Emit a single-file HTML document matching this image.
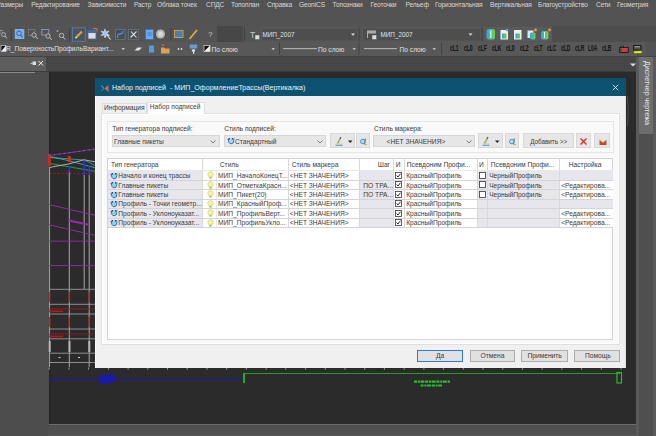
<!DOCTYPE html>
<html><head><meta charset="utf-8">
<style>
*{margin:0;padding:0;box-sizing:border-box}
html,body{width:656px;height:436px;overflow:hidden;background:#535353;font-family:"Liberation Sans",sans-serif;position:relative}
.a{position:absolute}
.t{position:absolute;white-space:nowrap;line-height:1}
</style></head><body>
<div class="a" style="left:0px;top:0px;width:656px;height:26px;background:#535353"></div>
<div class="t" style="left:-3.5px;top:1.6px;font-size:6.6px;color:#d8d8d8;letter-spacing:-0.12px">Размеры</div>
<div class="t" style="left:31.3px;top:1.6px;font-size:6.6px;color:#d8d8d8;letter-spacing:-0.12px">Редактирование</div>
<div class="t" style="left:87.5px;top:1.6px;font-size:6.6px;color:#d8d8d8;letter-spacing:-0.12px">Зависимости</div>
<div class="t" style="left:134px;top:1.6px;font-size:6.6px;color:#d8d8d8;letter-spacing:-0.12px">Растр</div>
<div class="t" style="left:157px;top:1.6px;font-size:6.6px;color:#d8d8d8;letter-spacing:-0.12px">Облака точек</div>
<div class="t" style="left:206px;top:1.6px;font-size:6.6px;color:#d8d8d8;letter-spacing:-0.12px">СПДС</div>
<div class="t" style="left:231px;top:1.6px;font-size:6.6px;color:#d8d8d8;letter-spacing:-0.12px">Топоплан</div>
<div class="t" style="left:267px;top:1.6px;font-size:6.6px;color:#d8d8d8;letter-spacing:-0.12px">Справка</div>
<div class="t" style="left:299px;top:1.6px;font-size:6.6px;color:#d8d8d8;letter-spacing:-0.12px">GeoniCS</div>
<div class="t" style="left:332.5px;top:1.6px;font-size:6.6px;color:#d8d8d8;letter-spacing:-0.12px">Топознаки</div>
<div class="t" style="left:370.5px;top:1.6px;font-size:6.6px;color:#d8d8d8;letter-spacing:-0.12px">Геоточки</div>
<div class="t" style="left:405.5px;top:1.6px;font-size:6.6px;color:#d8d8d8;letter-spacing:-0.12px">Рельеф</div>
<div class="t" style="left:435px;top:1.6px;font-size:6.6px;color:#d8d8d8;letter-spacing:-0.12px">Горизонтальная</div>
<div class="t" style="left:490px;top:1.6px;font-size:6.6px;color:#d8d8d8;letter-spacing:-0.12px">Вертикальная</div>
<div class="t" style="left:538px;top:1.6px;font-size:6.6px;color:#d8d8d8;letter-spacing:-0.12px">Благоустройство</div>
<div class="t" style="left:596px;top:1.6px;font-size:6.6px;color:#d8d8d8;letter-spacing:-0.12px">Сети</div>
<div class="t" style="left:617px;top:1.6px;font-size:6.6px;color:#d8d8d8;letter-spacing:-0.12px">Геометрия</div>
<div class="a" style="left:0px;top:26px;width:656px;height:16px;background:#4d4d4d"></div>
<div class="a" style="left:0px;top:26px;width:552px;height:16px;background:#545454"></div>
<div class="a" style="left:0px;top:42px;width:646px;height:13.5px;background:#585858"></div>
<div class="a" style="left:0px;top:55.5px;width:656px;height:1.5px;background:#424242"></div>
<svg class="a" style="left:0;top:0" width="656" height="60"><path d="M0 30.5 h3 M0 30.5 v3" stroke="#aaa" stroke-width="0.7"/><circle cx="3.5" cy="34.5" r="2" fill="none" stroke="#b8b8b8" stroke-width="0.9"/><path d="M5 36 L7 38.5" stroke="#b8b8b8" stroke-width="1"/><rect x="10.8" y="28" width="0.8" height="13" fill="#3c3c3c"/><rect x="14.8" y="29" width="9.5" height="10" fill="#7fb0e8"/><circle cx="19" cy="33.3" r="2.3" fill="none" stroke="#2a68b8" stroke-width="1"/><path d="M20.6 35 L22.6 37.3" stroke="#2a68b8" stroke-width="1.1"/><rect x="28.5" y="29.5" width="6.5" height="6" fill="none" stroke="#a8a8a8" stroke-width="0.7" stroke-dasharray="1 1"/><circle cx="34" cy="35" r="2.2" fill="#545454" stroke="#c0c0c0" stroke-width="0.9"/><path d="M35.6 36.6 L37.8 39" stroke="#c0c0c0" stroke-width="1"/><rect x="41.8" y="29.5" width="7" height="5.5" fill="none" stroke="#8898c0" stroke-width="0.9"/><circle cx="48" cy="36" r="2.2" fill="#545454" stroke="#c0c0c0" stroke-width="0.9"/><path d="M49.6 37.6 L51.8 40" stroke="#c0c0c0" stroke-width="1"/><circle cx="57.5" cy="31" r="1" fill="#7aa8e0"/><circle cx="61.5" cy="35.5" r="2.2" fill="none" stroke="#c0c0c0" stroke-width="0.9"/><path d="M63.1 37.1 L65.3 39.5" stroke="#c0c0c0" stroke-width="1"/><rect x="69" y="28" width="0.8" height="13" fill="#3c3c3c"/><rect x="72.4" y="27.8" width="13" height="13.5" fill="#4a5562" stroke="#5a7ca0" stroke-width="0.9"/><path d="M76.5 37 L82 31.5" stroke="#e89a40" stroke-width="2.2"/><path d="M75.5 38.2 L76.8 36.8" stroke="#f0e0c0" stroke-width="1.6"/><rect x="88" y="30.5" width="8" height="8.5" fill="#ddd" stroke="#3a6ab0" stroke-width="0.8"/><rect x="88" y="30.5" width="8" height="2.5" fill="#3a6ab0"/><path d="M93 28.5 h4 v3" stroke="#e07030" stroke-width="1" fill="none"/><path d="M105 29 L106 32 L109 31 L107 33.5 L109.5 35.5 L106.5 35 L105 38 L104 35 L101 35.5 L103 33.5 L101 31 L104 32Z" fill="#a0c0f0" stroke="#e8f0ff" stroke-width="0.5"/><path d="M107 35 L110.5 39.5" stroke="#e0e0e0" stroke-width="1.1"/><rect x="115.5" y="29.5" width="9.5" height="10" fill="#474d55" stroke="#68747e" stroke-width="0.8"/><path d="M117.5 38 Q117 34 120 34 Q123 34 123 31" stroke="#4a8ae0" stroke-width="1.3" fill="none"/><rect x="128.5" y="29.5" width="10" height="10" fill="#4a4f55" stroke="#65707a" stroke-width="0.8"/><path d="M130.5 37.5 L136.5 31.5 M131 31.5 L136.5 37.5" stroke="#e0e0e0" stroke-width="1.1"/><rect x="145.5" y="29.5" width="8" height="10" fill="#6aaaf0" stroke="#3a6ab8" stroke-width="0.8"/><path d="M147.5 33 h4 M147.5 35 h4" stroke="#2a5aa0" stroke-width="0.6"/><circle cx="160.5" cy="34" r="4.5" fill="#b8b8b8"/><circle cx="160.5" cy="34" r="2.5" fill="#d8d8d8"/><rect x="170.5" y="28" width="0.8" height="13" fill="#3c3c3c"/><rect x="174.5" y="30.5" width="8.5" height="7" fill="#4a7ab8" stroke="#e0b040" stroke-width="0.8"/><path d="M189.5 39 L197 30" stroke="#e8b040" stroke-width="1.6"/><text x="208" y="37.3" font-size="8" fill="#c8c8c8" font-family="Liberation Sans">?</text><rect x="217" y="26" width="25.5" height="16" fill="#474747"/><rect x="244" y="27" width="0.8" height="14" fill="#3c3c3c"/><text x="250" y="38" font-size="8.5" fill="#c8c8c8" font-family="Liberation Sans">T</text><rect x="255" y="35" width="4.5" height="4.5" fill="#ddd" stroke="#555" stroke-width="0.5"/><rect x="261.5" y="28" width="96" height="13" fill="#4e4e4e" stroke="#5c5c5c" stroke-width="0.8"/><path d="M351 33.5 h4 l-2 2.2z" fill="#e0e0e0"/><rect x="358.5" y="28" width="0.8" height="13" fill="#3c3c3c"/><rect x="362.5" y="28" width="118" height="13" fill="#4e4e4e" stroke="#5c5c5c" stroke-width="0.8"/><rect x="367" y="30.5" width="9" height="3" fill="#aaa"/><rect x="367" y="33" width="1" height="5" fill="#aaa"/><rect x="372" y="35" width="4.5" height="4.5" fill="#ddd" stroke="#555" stroke-width="0.5"/><path d="M468.5 33.5 h4 l-2 2.2z" fill="#e0e0e0"/><rect x="481.5" y="28" width="0.8" height="13" fill="#3c3c3c"/><rect x="484" y="27" width="68" height="14" fill="#5a5a5a"/><defs><linearGradient id="gb" x1="0" y1="0" x2="1" y2="0"><stop offset="0" stop-color="#28a8e8"/><stop offset="1" stop-color="#78d040"/></linearGradient></defs><rect x="486.5" y="29" width="8.5" height="10.5" rx="2.5" fill="url(#gb)"/><path d="M490.8 30.5 V38" stroke="#e8f8ff" stroke-width="1.2"/><rect x="500.5" y="30" width="7.5" height="9.5" fill="#eeeeee"/><rect x="502" y="33.5" width="4.5" height="5" fill="url(#gb)"/><circle cx="507" cy="30" r="1.3" fill="#5aa0e0"/><rect x="514" y="30" width="7.5" height="9.5" fill="#eeeeee"/><rect x="515.5" y="33.5" width="4.5" height="5" fill="url(#gb)"/><rect x="527.5" y="30.5" width="6" height="7.5" fill="#dde8f0"/><rect x="530" y="32.5" width="5.5" height="7" rx="1.5" fill="url(#gb)"/><circle cx="535.5" cy="30" r="1.4" fill="#f0a040"/><rect x="541" y="31" width="7.5" height="8.5" rx="2" fill="url(#gb)"/><path d="M544.5 32 V38" stroke="#e8f8ff" stroke-width="1"/><circle cx="549.5" cy="30" r="1.4" fill="#f09040"/><rect x="1" y="45.5" width="5" height="6" fill="#111" stroke="#ddd" stroke-width="0.6"/><path d="M1 51.5 L6 45.5 V51.5Z" fill="#eee"/><path d="M121.5 48.2 h3.4 l-1.7 1.8z" fill="#e0e0e0"/><path d="M134.5 50.5 L137.5 47.5 H142 L139 50.5Z" fill="#e0e0e0"/><rect x="149" y="45.5" width="5" height="7" fill="#5a98e0"/><path d="M161 47.5 h3 l1 1 h4.5 v5 h-8.5z" fill="#e0a050"/><path d="M162 45 h2" stroke="#e0a050" stroke-width="0.8"/><circle cx="178.5" cy="49" r="0.9" fill="#ddd"/><circle cx="181.5" cy="49" r="0.9" fill="#ddd"/><rect x="189.7" y="44.5" width="7.5" height="4" fill="#6a9ad0"/><circle cx="193.5" cy="50.5" r="1.6" fill="#ddd"/><rect x="193" y="51" width="1.2" height="3" fill="#ddd"/><rect x="204" y="45.5" width="6" height="6" fill="#111" stroke="#eee" stroke-width="0.6"/><path d="M204 51.5 L210 45.5 V51.5Z" fill="#eee"/><path d="M271.5 48.2 h3.4 l-1.7 1.8z" fill="#e0e0e0"/><rect x="279" y="42.5" width="0.8" height="12" fill="#3c3c3c"/><rect x="283" y="48.3" width="34" height="0.8" fill="#d0d0d0"/><path d="M352.5 48.2 h3.4 l-1.7 1.8z" fill="#e0e0e0"/><rect x="358.5" y="42.5" width="0.8" height="12" fill="#3c3c3c"/><rect x="364" y="48.3" width="33" height="0.8" fill="#d0d0d0"/><path d="M432.5 48.2 h3.4 l-1.7 1.8z" fill="#e0e0e0"/><rect x="441" y="42.5" width="0.8" height="12" fill="#3c3c3c"/><path d="M620 47.5 h8 M620 50 h8 M620 52.5 h8 M621 45.5 v2 M623.5 45.5 v2" stroke="#1a1a1a" stroke-width="0.9"/><rect x="621.5" y="48" width="6" height="3.5" fill="#e03838"/><path d="M619.5 47 V53 M628.5 47 V53" stroke="#1a1a1a" stroke-width="0.8"/><rect x="633.5" y="45.5" width="7.5" height="4.5" fill="#505050" stroke="#1a1a1a" stroke-width="0.9"/><path d="M634.5 46.8 h5.5" stroke="#ddd" stroke-width="0.6"/><path d="M633 51 L641.5 50.5 L642.5 53.5 L634 53.8Z" fill="#e0e830" stroke="#222" stroke-width="0.5"/></svg>
<div class="t" style="left:6px;top:46.2px;font-size:6.65px;color:#e0e0e0;letter-spacing:0px">R_ПоверхностьПрофильВариант...</div>
<div class="t" style="left:211.5px;top:46.5px;font-size:6.65px;color:#e0e0e0;">По слою</div>
<div class="t" style="left:318px;top:46.7px;font-size:6.65px;color:#e0e0e0;">По слою</div>
<div class="t" style="left:399.5px;top:46.7px;font-size:6.65px;color:#e0e0e0;">По слою</div>
<div class="t" style="left:262.4px;top:31.6px;font-size:6.35px;color:#e0e0e0;">МИП_2007</div>
<div class="t" style="left:380.5px;top:31.6px;font-size:6.35px;color:#e0e0e0;">МИП_2007</div>
<div class="t" style="left:450px;top:44px;font-size:9px;color:#111111;transform:scaleX(0.55);transform-origin:left;font-weight:bold">cL1</div>
<div class="t" style="left:464px;top:44px;font-size:9px;color:#111111;transform:scaleX(0.55);transform-origin:left;font-weight:bold">cL0</div>
<div class="t" style="left:478px;top:44px;font-size:9px;color:#111111;transform:scaleX(0.55);transform-origin:left;font-weight:bold">cLF</div>
<div class="t" style="left:492px;top:44px;font-size:9px;color:#111111;transform:scaleX(0.55);transform-origin:left;font-weight:bold">cLK</div>
<div class="t" style="left:506px;top:44px;font-size:9px;color:#111111;transform:scaleX(0.55);transform-origin:left;font-weight:bold">cL0</div>
<div class="t" style="left:520px;top:44px;font-size:9px;color:#111111;transform:scaleX(0.55);transform-origin:left;font-weight:bold">cL2</div>
<div class="t" style="left:533.5px;top:44px;font-size:9px;color:#111111;transform:scaleX(0.55);transform-origin:left;font-weight:bold">cLT</div>
<div class="t" style="left:547px;top:44px;font-size:9px;color:#111111;transform:scaleX(0.55);transform-origin:left;font-weight:bold">cLC</div>
<div class="t" style="left:561px;top:44px;font-size:9px;color:#111111;transform:scaleX(0.55);transform-origin:left;font-weight:bold">cLD</div>
<div class="t" style="left:574.5px;top:44px;font-size:9px;color:#111111;transform:scaleX(0.55);transform-origin:left;font-weight:bold">cLR</div>
<div class="t" style="left:588px;top:44px;font-size:9px;color:#111111;transform:scaleX(0.55);transform-origin:left;font-weight:bold">L0A</div>
<div class="t" style="left:602px;top:44px;font-size:9px;color:#111111;transform:scaleX(0.55);transform-origin:left;font-weight:bold">cLB</div>
<div class="a" style="left:0px;top:57px;width:656px;height:15px;background:#474747"></div>
<div class="a" style="left:0px;top:57px;width:46px;height:14px;background:#5e5e5e"></div>
<svg class="a" style="left:30px;top:60px" width="16" height="8" viewBox="0 0 16 8"><rect x="2.5" y="1.5" width="3.5" height="3.5" fill="#ddd"/><rect x="0.5" y="3" width="2" height="0.8" fill="#ddd"/><path d="M8.5 1 L13 5.5 M13 1 L8.5 5.5" stroke="#eee" stroke-width="1"/></svg>
<svg class="a" style="left:628px;top:62px" width="10" height="6" viewBox="0 0 10 6"><path d="M2 1.5 h6 l-3 3z" fill="#e0e0e0"/></svg>
<div class="a" style="left:0px;top:71px;width:656px;height:1px;background:#3c3c3c"></div>
<div class="a" style="left:0px;top:72px;width:49px;height:364px;background:#4d4d4d"></div>
<div class="a" style="left:0px;top:72px;width:35px;height:1px;background:#8a8a8a"></div>
<div class="a" style="left:48.8px;top:72px;width:587.2px;height:351.5px;background:#2b2b2b"></div>
<div class="a" style="left:48.8px;top:72px;width:2px;height:351.5px;background:#262626"></div>
<div class="a" style="left:48.8px;top:423.5px;width:587.2px;height:1.8px;background:#6a6a6a"></div>
<div class="a" style="left:48.8px;top:425.3px;width:587.2px;height:11px;background:#4f4f4f"></div>
<div class="a" style="left:48px;top:434.5px;width:590px;height:1.5px;background:#5c5c5c"></div>
<div class="a" style="left:636px;top:57px;width:20px;height:379px;background:#4f4f4f"></div>
<div class="a" style="left:636px;top:57px;width:3px;height:379px;background:#5a5a5a"></div>
<div class="a" style="left:639px;top:57px;width:13.5px;height:77px;background:#6d6d6d"></div>
<div class="t" style="left:641px;top:61px;font-size:7.1px;color:#e8e8e8;transform-origin:0 0;transform:translate(9.2px,0) rotate(90deg)">Диспетчер чертежа</div>
<div class="a" style="left:652.5px;top:57px;width:3.5px;height:379px;background:#5a5a5a"></div>
<svg class="a" style="left:0;top:0" width="656" height="436"><path d="M49.6 167.5 V367 M69.3 171 V367 M89.2 175 V367 M84.2 175 V289" stroke="#a8a8a8" stroke-width="1"/><path d="M49 289.3 H95" stroke="#9a9a9a" stroke-width="0.9"/><path d="M49 304.3 H95" stroke="#9a9a9a" stroke-width="0.9"/><path d="M49 314 H95" stroke="#9a9a9a" stroke-width="0.9"/><path d="M49 329 H95" stroke="#9a9a9a" stroke-width="0.9"/><path d="M49 338.8 H95" stroke="#9a9a9a" stroke-width="0.9"/><path d="M49 353.2 H95" stroke="#9a9a9a" stroke-width="0.9"/><path d="M49 362.5 H95" stroke="#9a9a9a" stroke-width="0.9"/><path d="M49 204.6 L96 215.5 M49 224.8 L96 235.6 M49 241.1 H96 M49 265.6 H96" stroke="#9a28b4" stroke-width="0.9"/><path d="M69 220.5 L87.5 224.5" stroke="#9a28b4" stroke-width="2.2" stroke-linecap="round"/><path d="M49 155.5 L96 149" stroke="#8a28b0" stroke-width="1.2"/><path d="M49 155.5 L96 149" stroke="#c8c8c8" stroke-width="1" stroke-dasharray="0.8 4.2" opacity="0.6"/><path d="M50 156.5 L69 160.8 L96 168" stroke="#30a8a8" stroke-width="1"/><path d="M50 163.5 L96 171.5" stroke="#20a040" stroke-width="1.2"/><path d="M49 167.5 L69 163.9 L84 159.8 L96 162" stroke="#c0c0c0" stroke-width="0.9" fill="none"/><path d="M50 157.5 L84 160 L96 166" stroke="#50b8b0" stroke-width="0.7" fill="none"/><rect x="48" y="154" width="3" height="12" fill="#d83020" opacity="0.8"/><rect x="67.8" y="156.2" width="3" height="6" fill="#d83020"/><rect x="68.3" y="165.5" width="2" height="7" fill="#3030d8" opacity="0.85"/><rect x="83.3" y="160.5" width="2" height="14.5" fill="#3030d8" opacity="0.85"/><rect x="88.2" y="166.5" width="2" height="8.5" fill="#3030d8" opacity="0.85"/><path d="M50 173.5 H96" stroke="#c02840" stroke-width="0.9" stroke-dasharray="1.2 2.8"/><rect x="48.900000000000006" y="292" width="1.6" height="10" fill="#c01a1a" opacity="0.85"/><rect x="68.7" y="292" width="1.6" height="10" fill="#c01a1a" opacity="0.85"/><rect x="88.5" y="292" width="1.6" height="10" fill="#c01a1a" opacity="0.85"/><rect x="48.900000000000006" y="317" width="1.6" height="10" fill="#c01a1a" opacity="0.85"/><rect x="68.7" y="317" width="1.6" height="10" fill="#c01a1a" opacity="0.85"/><rect x="88.5" y="317" width="1.6" height="10" fill="#c01a1a" opacity="0.85"/><path d="M49 308.9 H95" stroke="#a81818" stroke-width="0.8"/><rect x="49" y="310.5" width="14" height="1.6" fill="#b81818"/><path d="M49 334 H95" stroke="#a81818" stroke-width="0.8"/><rect x="49" y="335.6" width="14" height="1.6" fill="#b81818"/><rect x="48.7" y="341" width="2" height="11" fill="#b8b8b8"/><rect x="68.5" y="341" width="2" height="11" fill="#b8b8b8"/><rect x="88.3" y="341" width="2" height="11" fill="#b8b8b8"/><path d="M58.5 357.5 h2 M78 357.5 h2" stroke="#ccc" stroke-width="1.2"/><path d="M49.2 367.5 v2.2 M68.9 367.5 v2.2 M88.6 367.5 v2.2 M108.4 367.5 v2.2 M128.1 367.5 v2.2 M147.8 367.5 v2.2 M167.5 367.5 v2.2 M187.2 367.5 v2.2 M207.0 367.5 v2.2 M226.7 367.5 v2.2 M246.4 367.5 v2.2 M266.1 367.5 v2.2 M285.8 367.5 v2.2 M305.6 367.5 v2.2 M325.3 367.5 v2.2 M345.0 367.5 v2.2 M364.7 367.5 v2.2 M384.4 367.5 v2.2 M404.2 367.5 v2.2 M423.9 367.5 v2.2 M443.6 367.5 v2.2 M463.3 367.5 v2.2 M483.0 367.5 v2.2 M502.8 367.5 v2.2 M522.5 367.5 v2.2 M542.2 367.5 v2.2 M561.9 367.5 v2.2 M581.6 367.5 v2.2 M601.4 367.5 v2.2 M621.1 367.5 v2.2 " stroke="#b0b0b0" stroke-width="0.8"/><path d="M48.8 378.9 H244" stroke="#1c1c94" stroke-width="1.2"/><path d="M99 375.5 Q107 373.5 115.5 375 L114.5 382 Q106 385 100 383 Z" fill="#1a1aa8"/><path d="M244 373.5 H620" stroke="#1ea01e" stroke-width="1"/><rect x="243" y="373" width="2" height="10" fill="#20b020"/><rect x="617" y="372.5" width="4.5" height="10.5" fill="none" stroke="#20c020" stroke-width="1.2"/><path d="M414 381.6 H450 M420.6 385.5 H442" stroke="#28c028" stroke-width="2.2" stroke-dasharray="3 0.8 2 0.6 4 0.8"/><path d="M627.5 96 Q629 110 627.5 126" stroke="#555" stroke-width="0.8" fill="none"/></svg>
<div class="a" style="left:95.3px;top:78px;width:530.5px;height:18.3px;background:#0e5272"></div>
<svg class="a" style="left:100px;top:84px" width="10" height="9" viewBox="0 0 10 9"><path d="M1 2 L4 4.5 L1 7 M4 4.5 L1.5 1" stroke="#7a9ab0" stroke-width="0.6" fill="none"/><path d="M8.5 1 L4.5 4.5 L8.5 8Z" fill="#e86048"/></svg>
<div class="t" style="left:112px;top:85.3px;font-size:7.1px;color:#eef3f6;">Набор подписей&nbsp; - МИП_ОформлениеТрассы(Вертикалка)</div>
<svg class="a" style="left:611px;top:83px" width="9" height="9" viewBox="0 0 9 9"><path d="M1.8 1.8 L7.2 7.2 M7.2 1.8 L1.8 7.2" stroke="#d8e8f0" stroke-width="0.9"/></svg>
<div class="a" style="left:95.3px;top:96.3px;width:530.5px;height:271.7px;background:#f0f0f0;border-left:1px solid #fdfdfd;border-right:1px solid #e0e0e0"></div>
<div class="a" style="left:101.8px;top:103px;width:45.2px;height:10px;background:#f0f0f0;border:1px solid #dedede;border-bottom:none"></div>
<div class="t" style="left:104px;top:104.5px;font-size:6.65px;color:#3a3a3a;">Информация</div>
<div class="a" style="left:147px;top:102px;width:58px;height:11px;background:#ffffff;border:1px solid #dedede;border-bottom:none"></div>
<div class="t" style="left:149.8px;top:103.8px;font-size:6.65px;color:#3a3a3a;">Набор подписей</div>
<div class="a" style="left:100.8px;top:112.5px;width:519.2px;height:232px;background:#f9f9f9;border:1px solid #e0e0e0"></div>
<div class="a" style="left:101.8px;top:113.5px;width:517.2px;height:230px;border:1px solid #fdfdfd"></div>
<div class="a" style="left:148px;top:112px;width:56px;height:1.5px;background:#ffffff"></div>
<div class="a" style="left:107.4px;top:121.3px;width:506.3px;height:31.5px;border:1px solid #e6e6e6"></div>
<div class="t" style="left:112.3px;top:125.5px;font-size:6.65px;color:#3a3a3a;">Тип генератора подписей:</div>
<div class="t" style="left:224.2px;top:125.5px;font-size:6.65px;color:#3a3a3a;">Стиль подписей:</div>
<div class="t" style="left:374px;top:125.5px;font-size:6.65px;color:#3a3a3a;">Стиль маркера:</div>
<div class="a" style="left:111.5px;top:135.3px;width:108px;height:11.5px;background:#e6e6e6;border:1px solid #d6d6d6"></div>
<div class="t" style="left:114.0px;top:138.6px;font-size:6.65px;color:#3a3a3a;">Главные пикеты</div>
<svg class="a" style="left:210.0px;top:139.5px" width="6" height="4" viewBox="0 0 6 4"><path d="M0.5 0.5 L3 3 L5.5 0.5" stroke="#606060" stroke-width="0.8" fill="none"/></svg>
<div class="a" style="left:224px;top:135.3px;width:102px;height:11.5px;background:#e6e6e6;border:1px solid #d6d6d6"></div>
<svg class="a" style="left:226.8px;top:137.2px" width="8" height="8" viewBox="0 0 8 8"><path d="M1.5 1.5 Q1 6.5 4 6.8 Q7 6.8 6.8 3.5 V1.2" fill="#a8d8f0" stroke="#2a6aa8" stroke-width="0.9"/><path d="M2.5 1 v1.5 M5.5 1 v1.5" stroke="#1a4a88" stroke-width="1.1"/><path d="M0.3 2.5 L1.8 3.5" stroke="#2a6aa8" stroke-width="0.7"/></svg>
<div class="t" style="left:235px;top:138.6px;font-size:6.65px;color:#3a3a3a;">Стандартный</div>
<svg class="a" style="left:316.5px;top:139.5px" width="6" height="4" viewBox="0 0 6 4"><path d="M0.5 0.5 L3 3 L5.5 0.5" stroke="#606060" stroke-width="0.8" fill="none"/></svg>
<div class="a" style="left:373px;top:135.3px;width:102px;height:11.5px;background:#e6e6e6;border:1px solid #d6d6d6"></div>
<div class="t" style="left:386.5px;top:138.6px;font-size:6.65px;color:#3a3a3a;">&lt;НЕТ ЗНАЧЕНИЯ&gt;</div>
<svg class="a" style="left:465.5px;top:139.5px" width="6" height="4" viewBox="0 0 6 4"><path d="M0.5 0.5 L3 3 L5.5 0.5" stroke="#606060" stroke-width="0.8" fill="none"/></svg>
<div class="a" style="left:330px;top:133.4px;width:25px;height:14.2px;background:#e6e6e6;border:1px solid #d8d8d8;"></div>
<svg class="a" style="left:333.5px;top:135.5px" width="11" height="11" viewBox="0 0 11 11"><rect x="1.5" y="6.5" width="7" height="3" fill="#c8e0f0"/><path d="M1.5 9.3 H8.5" stroke="#4a7ab0" stroke-width="0.8"/><path d="M3.5 7.5 L6.5 2" stroke="#b8b040" stroke-width="1.6"/><path d="M6 2.8 L7 1" stroke="#505a70" stroke-width="1.2"/></svg>
<svg class="a" style="left:347.5px;top:139.5px" width="5" height="4" viewBox="0 0 5 4"><path d="M0 0.5 H4.5 L2.25 3Z" fill="#222"/></svg>
<div class="a" style="left:355.5px;top:133.4px;width:14px;height:14.2px;background:#e6e6e6;border:1px solid #d8d8d8;"></div>
<svg class="a" style="left:358.5px;top:136.5px" width="9" height="9" viewBox="0 0 9 9"><circle cx="3.8" cy="4.5" r="2.3" fill="#b8d8e8" stroke="#4a88b8" stroke-width="0.9"/><path d="M6.5 1.5 L5.5 7.5" stroke="#4a88b8" stroke-width="1.1"/><path d="M5 7.5 h3" stroke="#c8b040" stroke-width="0.9"/></svg>
<div class="a" style="left:477.8px;top:133.4px;width:25px;height:14.2px;background:#e6e6e6;border:1px solid #d8d8d8;"></div>
<svg class="a" style="left:481.3px;top:135.5px" width="11" height="11" viewBox="0 0 11 11"><rect x="1.5" y="6.5" width="7" height="3" fill="#c8e0f0"/><path d="M1.5 9.3 H8.5" stroke="#4a7ab0" stroke-width="0.8"/><path d="M3.5 7.5 L6.5 2" stroke="#b8b040" stroke-width="1.6"/><path d="M6 2.8 L7 1" stroke="#505a70" stroke-width="1.2"/></svg>
<svg class="a" style="left:495.3px;top:139.5px" width="5" height="4" viewBox="0 0 5 4"><path d="M0 0.5 H4.5 L2.25 3Z" fill="#222"/></svg>
<div class="a" style="left:505px;top:133.4px;width:14px;height:14.2px;background:#e6e6e6;border:1px solid #d8d8d8;"></div>
<svg class="a" style="left:508px;top:136.5px" width="9" height="9" viewBox="0 0 9 9"><circle cx="3.8" cy="4.5" r="2.3" fill="#b8d8e8" stroke="#4a88b8" stroke-width="0.9"/><path d="M6.5 1.5 L5.5 7.5" stroke="#4a88b8" stroke-width="1.1"/><path d="M5 7.5 h3" stroke="#c8b040" stroke-width="0.9"/></svg>
<div class="a" style="left:522.5px;top:133.4px;width:51.5px;height:14.2px;background:#e6e6e6;border:1px solid #d8d8d8;"></div>
<div class="t" style="left:530.2px;top:139px;font-size:6.3px;color:#3a3a3a;">Добавить &gt;&gt;</div>
<div class="a" style="left:576px;top:133.4px;width:14.5px;height:14.2px;background:#e6e6e6;border:1px solid #d8d8d8;"></div>
<svg class="a" style="left:579px;top:137.3px" width="9" height="9" viewBox="0 0 9 9"><path d="M1.5 1.5 L7.5 7.5 M7.5 1.5 L1.5 7.5" stroke="#e02828" stroke-width="1.4"/></svg>
<div class="a" style="left:594px;top:133.4px;width:16px;height:14.2px;background:#e6e6e6;border:1px solid #d8d8d8;"></div>
<svg class="a" style="left:598.5px;top:138.5px" width="9" height="7" viewBox="0 0 9 7"><path d="M0.5 1 L4 3.5 L7.5 1 V6 H0.5Z" fill="#b84a30"/><path d="M0.5 1 L4 3.5 L7.5 1" stroke="#e8a040" stroke-width="0.8" fill="none"/></svg>
<div class="a" style="left:107px;top:158.3px;width:506px;height:181.3px;background:#ffffff;border:1px solid #d4d4d4"></div>
<div class="a" style="left:107.5px;top:170.9px;width:94.69999999999999px;height:8.95px;background:#e6e6ec"></div>
<div class="a" style="left:202.7px;top:170.9px;width:13.300000000000011px;height:8.95px;background:#ffffff"></div>
<div class="a" style="left:216.5px;top:170.9px;width:71.30000000000001px;height:8.95px;background:#ffffff"></div>
<div class="a" style="left:288.3px;top:170.9px;width:70.69999999999999px;height:8.95px;background:#ffffff"></div>
<div class="a" style="left:359.5px;top:170.9px;width:33.19999999999999px;height:8.95px;background:#e6e6ec"></div>
<div class="a" style="left:393.2px;top:170.9px;width:11.0px;height:8.95px;background:#ffffff"></div>
<div class="a" style="left:404.7px;top:170.9px;width:71.80000000000001px;height:8.95px;background:#ffffff"></div>
<div class="a" style="left:477.0px;top:170.9px;width:10.199999999999989px;height:8.95px;background:#e6e6ec"></div>
<div class="a" style="left:487.7px;top:170.9px;width:71.50000000000006px;height:8.95px;background:#e6e6ec"></div>
<div class="a" style="left:559.7px;top:170.9px;width:53.299999999999955px;height:8.95px;background:#e6e6ec"></div>
<div class="a" style="left:107.5px;top:180.35px;width:94.69999999999999px;height:8.95px;background:#e6e6ec"></div>
<div class="a" style="left:202.7px;top:180.35px;width:13.300000000000011px;height:8.95px;background:#ffffff"></div>
<div class="a" style="left:216.5px;top:180.35px;width:71.30000000000001px;height:8.95px;background:#ffffff"></div>
<div class="a" style="left:288.3px;top:180.35px;width:70.69999999999999px;height:8.95px;background:#ffffff"></div>
<div class="a" style="left:359.5px;top:180.35px;width:33.19999999999999px;height:8.95px;background:#e6e6ec"></div>
<div class="a" style="left:393.2px;top:180.35px;width:11.0px;height:8.95px;background:#ffffff"></div>
<div class="a" style="left:404.7px;top:180.35px;width:71.80000000000001px;height:8.95px;background:#ffffff"></div>
<div class="a" style="left:477.0px;top:180.35px;width:10.199999999999989px;height:8.95px;background:#e6e6ec"></div>
<div class="a" style="left:487.7px;top:180.35px;width:71.50000000000006px;height:8.95px;background:#e6e6ec"></div>
<div class="a" style="left:559.7px;top:180.35px;width:53.299999999999955px;height:8.95px;background:#ffffff"></div>
<div class="a" style="left:107.5px;top:189.8px;width:94.69999999999999px;height:8.95px;background:#e6e6ec"></div>
<div class="a" style="left:202.7px;top:189.8px;width:13.300000000000011px;height:8.95px;background:#ffffff"></div>
<div class="a" style="left:216.5px;top:189.8px;width:71.30000000000001px;height:8.95px;background:#ffffff"></div>
<div class="a" style="left:288.3px;top:189.8px;width:70.69999999999999px;height:8.95px;background:#ffffff"></div>
<div class="a" style="left:359.5px;top:189.8px;width:33.19999999999999px;height:8.95px;background:#e6e6ec"></div>
<div class="a" style="left:393.2px;top:189.8px;width:11.0px;height:8.95px;background:#ffffff"></div>
<div class="a" style="left:404.7px;top:189.8px;width:71.80000000000001px;height:8.95px;background:#ffffff"></div>
<div class="a" style="left:477.0px;top:189.8px;width:10.199999999999989px;height:8.95px;background:#e6e6ec"></div>
<div class="a" style="left:487.7px;top:189.8px;width:71.50000000000006px;height:8.95px;background:#e6e6ec"></div>
<div class="a" style="left:559.7px;top:189.8px;width:53.299999999999955px;height:8.95px;background:#ffffff"></div>
<div class="a" style="left:107.5px;top:199.25px;width:94.69999999999999px;height:8.95px;background:#e6e6ec"></div>
<div class="a" style="left:202.7px;top:199.25px;width:13.300000000000011px;height:8.95px;background:#ffffff"></div>
<div class="a" style="left:216.5px;top:199.25px;width:71.30000000000001px;height:8.95px;background:#ffffff"></div>
<div class="a" style="left:288.3px;top:199.25px;width:70.69999999999999px;height:8.95px;background:#ffffff"></div>
<div class="a" style="left:359.5px;top:199.25px;width:33.19999999999999px;height:8.95px;background:#e6e6ec"></div>
<div class="a" style="left:393.2px;top:199.25px;width:11.0px;height:8.95px;background:#ffffff"></div>
<div class="a" style="left:404.7px;top:199.25px;width:71.80000000000001px;height:8.95px;background:#ffffff"></div>
<div class="a" style="left:477.0px;top:199.25px;width:10.199999999999989px;height:8.95px;background:#e6e6ec"></div>
<div class="a" style="left:487.7px;top:199.25px;width:71.50000000000006px;height:8.95px;background:#e6e6ec"></div>
<div class="a" style="left:559.7px;top:199.25px;width:53.299999999999955px;height:8.95px;background:#e6e6ec"></div>
<div class="a" style="left:107.5px;top:208.7px;width:94.69999999999999px;height:8.95px;background:#e6e6ec"></div>
<div class="a" style="left:202.7px;top:208.7px;width:13.300000000000011px;height:8.95px;background:#ffffff"></div>
<div class="a" style="left:216.5px;top:208.7px;width:71.30000000000001px;height:8.95px;background:#ffffff"></div>
<div class="a" style="left:288.3px;top:208.7px;width:70.69999999999999px;height:8.95px;background:#ffffff"></div>
<div class="a" style="left:359.5px;top:208.7px;width:33.19999999999999px;height:8.95px;background:#e6e6ec"></div>
<div class="a" style="left:393.2px;top:208.7px;width:11.0px;height:8.95px;background:#ffffff"></div>
<div class="a" style="left:404.7px;top:208.7px;width:71.80000000000001px;height:8.95px;background:#ffffff"></div>
<div class="a" style="left:477.0px;top:208.7px;width:10.199999999999989px;height:8.95px;background:#e6e6ec"></div>
<div class="a" style="left:487.7px;top:208.7px;width:71.50000000000006px;height:8.95px;background:#e6e6ec"></div>
<div class="a" style="left:559.7px;top:208.7px;width:53.299999999999955px;height:8.95px;background:#ffffff"></div>
<div class="a" style="left:107.5px;top:218.15px;width:94.69999999999999px;height:8.95px;background:#e6e6ec"></div>
<div class="a" style="left:202.7px;top:218.15px;width:13.300000000000011px;height:8.95px;background:#ffffff"></div>
<div class="a" style="left:216.5px;top:218.15px;width:71.30000000000001px;height:8.95px;background:#ffffff"></div>
<div class="a" style="left:288.3px;top:218.15px;width:70.69999999999999px;height:8.95px;background:#ffffff"></div>
<div class="a" style="left:359.5px;top:218.15px;width:33.19999999999999px;height:8.95px;background:#e6e6ec"></div>
<div class="a" style="left:393.2px;top:218.15px;width:11.0px;height:8.95px;background:#ffffff"></div>
<div class="a" style="left:404.7px;top:218.15px;width:71.80000000000001px;height:8.95px;background:#ffffff"></div>
<div class="a" style="left:477.0px;top:218.15px;width:10.199999999999989px;height:8.95px;background:#e6e6ec"></div>
<div class="a" style="left:487.7px;top:218.15px;width:71.50000000000006px;height:8.95px;background:#e6e6ec"></div>
<div class="a" style="left:559.7px;top:218.15px;width:53.299999999999955px;height:8.95px;background:#ffffff"></div>
<div class="a" style="left:202.2px;top:158.8px;width:0.7px;height:68.79999999999998px;background:#d8d8d8"></div>
<div class="a" style="left:216px;top:170.4px;width:0.7px;height:56.699999999999996px;background:#e6e6e6"></div>
<div class="a" style="left:287.8px;top:158.8px;width:0.7px;height:68.79999999999998px;background:#d8d8d8"></div>
<div class="a" style="left:359px;top:158.8px;width:0.7px;height:68.79999999999998px;background:#d8d8d8"></div>
<div class="a" style="left:392.7px;top:158.8px;width:0.7px;height:68.79999999999998px;background:#d8d8d8"></div>
<div class="a" style="left:404.2px;top:158.8px;width:0.7px;height:68.79999999999998px;background:#d8d8d8"></div>
<div class="a" style="left:476.5px;top:158.8px;width:0.7px;height:68.79999999999998px;background:#d8d8d8"></div>
<div class="a" style="left:487.2px;top:158.8px;width:0.7px;height:68.79999999999998px;background:#d8d8d8"></div>
<div class="a" style="left:559.2px;top:158.8px;width:0.7px;height:68.79999999999998px;background:#d8d8d8"></div>
<div class="a" style="left:107.5px;top:170.4px;width:505px;height:0.7px;background:#e8e8e8"></div>
<div class="a" style="left:107.5px;top:179.85px;width:505px;height:0.7px;background:#d4d4d4"></div>
<div class="a" style="left:107.5px;top:189.3px;width:505px;height:0.7px;background:#d4d4d4"></div>
<div class="a" style="left:107.5px;top:198.75px;width:505px;height:0.7px;background:#d4d4d4"></div>
<div class="a" style="left:107.5px;top:208.2px;width:505px;height:0.7px;background:#d4d4d4"></div>
<div class="a" style="left:107.5px;top:217.65px;width:505px;height:0.7px;background:#d4d4d4"></div>
<div class="a" style="left:107.5px;top:227.1px;width:505px;height:0.7px;background:#d4d4d4"></div>
<div class="t" style="left:111px;top:161.8px;font-size:6.65px;color:#3a3a3a;">Тип генератора</div>
<div class="t" style="left:219.8px;top:161.8px;font-size:6.65px;color:#3a3a3a;">Стиль</div>
<div class="t" style="left:291.7px;top:161.8px;font-size:6.65px;color:#3a3a3a;">Стиль маркера</div>
<div class="t" style="left:377.8px;top:161.8px;font-size:6.65px;color:#3a3a3a;">Шаг</div>
<div class="t" style="left:395.8px;top:161.8px;font-size:6.65px;color:#3a3a3a;">И</div>
<div class="t" style="left:406.8px;top:161.8px;font-size:6.65px;color:#3a3a3a;">Псевдоним Профи...</div>
<div class="t" style="left:478.9px;top:161.8px;font-size:6.65px;color:#3a3a3a;">И</div>
<div class="t" style="left:490.8px;top:161.8px;font-size:6.65px;color:#3a3a3a;">Псевдоним Профи...</div>
<div class="t" style="left:568.8px;top:161.8px;font-size:6.65px;color:#3a3a3a;">Настройка</div>
<svg class="a" style="left:110px;top:171.6px" width="8" height="8" viewBox="0 0 8 8"><path d="M1.5 1.5 Q1 6.5 4 6.8 Q7 6.8 6.8 3.5 V1.2" fill="#90d0f0" stroke="#2a6aa8" stroke-width="0.9"/><path d="M2.5 1 v1.5 M5.5 1 v1.5" stroke="#1a4a88" stroke-width="1.1"/><path d="M0.3 2.5 L1.8 3.5" stroke="#2a6aa8" stroke-width="0.7"/></svg>
<div class="t" style="left:118.3px;top:173.1px;font-size:6.65px;color:#3a3a3a;">Начало и конец трассы</div>
<svg class="a" style="left:206.7px;top:171.4px" width="7" height="8" viewBox="0 0 7 8"><path d="M3.5 0.8 C1.5 0.8 0.8 2.4 0.8 3.3 C0.8 4.6 2 5 2.2 6 H4.8 C5 5 6.2 4.6 6.2 3.3 C6.2 2.4 5.5 0.8 3.5 0.8Z" fill="#f4f4b0" stroke="#d4d050" stroke-width="0.8"/><rect x="2.3" y="6.3" width="2.4" height="1.2" fill="#999"/></svg>
<div class="t" style="left:218.0px;top:173.1px;font-size:6.65px;color:#3a3a3a;">МИП_НачалоКонецТ...</div>
<div class="t" style="left:289.8px;top:173.1px;font-size:6.65px;color:#3a3a3a;">&lt;НЕТ ЗНАЧЕНИЯ&gt;</div>
<svg class="a" style="left:394.7px;top:171.9px" width="7" height="7" viewBox="0 0 7 7"><rect x="0.5" y="0.5" width="6" height="6" fill="#fff" stroke="#333" stroke-width="0.8"/><path d="M1.6 3.5 L3 5 L5.4 1.8" stroke="#111" stroke-width="0.9" fill="none"/></svg>
<div class="t" style="left:406.2px;top:173.1px;font-size:6.65px;color:#3a3a3a;">КрасныйПрофиль</div>
<svg class="a" style="left:478.5px;top:171.9px" width="7" height="7" viewBox="0 0 7 7"><rect x="0.5" y="0.5" width="6" height="6" fill="#fff" stroke="#333" stroke-width="0.8"/></svg>
<div class="t" style="left:489.2px;top:173.1px;font-size:6.65px;color:#3a3a3a;">ЧерныйПрофиль</div>
<svg class="a" style="left:110px;top:181.04999999999998px" width="8" height="8" viewBox="0 0 8 8"><path d="M1.5 1.5 Q1 6.5 4 6.8 Q7 6.8 6.8 3.5 V1.2" fill="#90d0f0" stroke="#2a6aa8" stroke-width="0.9"/><path d="M2.5 1 v1.5 M5.5 1 v1.5" stroke="#1a4a88" stroke-width="1.1"/><path d="M0.3 2.5 L1.8 3.5" stroke="#2a6aa8" stroke-width="0.7"/></svg>
<div class="t" style="left:118.3px;top:182.54999999999998px;font-size:6.65px;color:#3a3a3a;">Главные пикеты</div>
<svg class="a" style="left:206.7px;top:180.85px" width="7" height="8" viewBox="0 0 7 8"><path d="M3.5 0.8 C1.5 0.8 0.8 2.4 0.8 3.3 C0.8 4.6 2 5 2.2 6 H4.8 C5 5 6.2 4.6 6.2 3.3 C6.2 2.4 5.5 0.8 3.5 0.8Z" fill="#f4f4b0" stroke="#d4d050" stroke-width="0.8"/><rect x="2.3" y="6.3" width="2.4" height="1.2" fill="#999"/></svg>
<div class="t" style="left:218.0px;top:182.54999999999998px;font-size:6.65px;color:#3a3a3a;">МИП_ОтметкаКрасн...</div>
<div class="t" style="left:289.8px;top:182.54999999999998px;font-size:6.65px;color:#3a3a3a;">&lt;НЕТ ЗНАЧЕНИЯ&gt;</div>
<div class="t" style="left:363.3px;top:182.54999999999998px;font-size:6.65px;color:#3a3a3a;">ПО ТРА...</div>
<svg class="a" style="left:394.7px;top:181.35px" width="7" height="7" viewBox="0 0 7 7"><rect x="0.5" y="0.5" width="6" height="6" fill="#fff" stroke="#333" stroke-width="0.8"/><path d="M1.6 3.5 L3 5 L5.4 1.8" stroke="#111" stroke-width="0.9" fill="none"/></svg>
<div class="t" style="left:406.2px;top:182.54999999999998px;font-size:6.65px;color:#3a3a3a;">КрасныйПрофиль</div>
<svg class="a" style="left:478.5px;top:181.35px" width="7" height="7" viewBox="0 0 7 7"><rect x="0.5" y="0.5" width="6" height="6" fill="#fff" stroke="#333" stroke-width="0.8"/></svg>
<div class="t" style="left:489.2px;top:182.54999999999998px;font-size:6.65px;color:#3a3a3a;">ЧерныйПрофиль</div>
<div class="t" style="left:561.2px;top:182.54999999999998px;font-size:6.65px;color:#3a3a3a;">&lt;Редактирова...</div>
<svg class="a" style="left:110px;top:190.5px" width="8" height="8" viewBox="0 0 8 8"><path d="M1.5 1.5 Q1 6.5 4 6.8 Q7 6.8 6.8 3.5 V1.2" fill="#90d0f0" stroke="#2a6aa8" stroke-width="0.9"/><path d="M2.5 1 v1.5 M5.5 1 v1.5" stroke="#1a4a88" stroke-width="1.1"/><path d="M0.3 2.5 L1.8 3.5" stroke="#2a6aa8" stroke-width="0.7"/></svg>
<div class="t" style="left:118.3px;top:192.0px;font-size:6.65px;color:#3a3a3a;">Главные пикеты</div>
<svg class="a" style="left:206.7px;top:190.3px" width="7" height="8" viewBox="0 0 7 8"><path d="M3.5 0.8 C1.5 0.8 0.8 2.4 0.8 3.3 C0.8 4.6 2 5 2.2 6 H4.8 C5 5 6.2 4.6 6.2 3.3 C6.2 2.4 5.5 0.8 3.5 0.8Z" fill="#f4f4b0" stroke="#d4d050" stroke-width="0.8"/><rect x="2.3" y="6.3" width="2.4" height="1.2" fill="#999"/></svg>
<div class="t" style="left:218.0px;top:192.0px;font-size:6.65px;color:#3a3a3a;">МИП_Пикет(20)</div>
<div class="t" style="left:289.8px;top:192.0px;font-size:6.65px;color:#3a3a3a;">&lt;НЕТ ЗНАЧЕНИЯ&gt;</div>
<div class="t" style="left:363.3px;top:192.0px;font-size:6.65px;color:#3a3a3a;">ПО ТРА...</div>
<svg class="a" style="left:394.7px;top:190.8px" width="7" height="7" viewBox="0 0 7 7"><rect x="0.5" y="0.5" width="6" height="6" fill="#fff" stroke="#333" stroke-width="0.8"/><path d="M1.6 3.5 L3 5 L5.4 1.8" stroke="#111" stroke-width="0.9" fill="none"/></svg>
<div class="t" style="left:406.2px;top:192.0px;font-size:6.65px;color:#3a3a3a;">КрасныйПрофиль</div>
<svg class="a" style="left:478.5px;top:190.8px" width="7" height="7" viewBox="0 0 7 7"><rect x="0.5" y="0.5" width="6" height="6" fill="#fff" stroke="#333" stroke-width="0.8"/></svg>
<div class="t" style="left:489.2px;top:192.0px;font-size:6.65px;color:#3a3a3a;">ЧерныйПрофиль</div>
<div class="t" style="left:561.2px;top:192.0px;font-size:6.65px;color:#3a3a3a;">&lt;Редактирова...</div>
<svg class="a" style="left:110px;top:199.95px" width="8" height="8" viewBox="0 0 8 8"><path d="M1.5 1.5 Q1 6.5 4 6.8 Q7 6.8 6.8 3.5 V1.2" fill="#90d0f0" stroke="#2a6aa8" stroke-width="0.9"/><path d="M2.5 1 v1.5 M5.5 1 v1.5" stroke="#1a4a88" stroke-width="1.1"/><path d="M0.3 2.5 L1.8 3.5" stroke="#2a6aa8" stroke-width="0.7"/></svg>
<div class="t" style="left:118.3px;top:201.45px;font-size:6.65px;color:#3a3a3a;">Профиль - Точки геометр...</div>
<svg class="a" style="left:206.7px;top:199.75px" width="7" height="8" viewBox="0 0 7 8"><path d="M3.5 0.8 C1.5 0.8 0.8 2.4 0.8 3.3 C0.8 4.6 2 5 2.2 6 H4.8 C5 5 6.2 4.6 6.2 3.3 C6.2 2.4 5.5 0.8 3.5 0.8Z" fill="#f4f4b0" stroke="#d4d050" stroke-width="0.8"/><rect x="2.3" y="6.3" width="2.4" height="1.2" fill="#999"/></svg>
<div class="t" style="left:218.0px;top:201.45px;font-size:6.65px;color:#3a3a3a;">МИП_КрасныйПроф...</div>
<div class="t" style="left:289.8px;top:201.45px;font-size:6.65px;color:#3a3a3a;">&lt;НЕТ ЗНАЧЕНИЯ&gt;</div>
<svg class="a" style="left:394.7px;top:200.25px" width="7" height="7" viewBox="0 0 7 7"><rect x="0.5" y="0.5" width="6" height="6" fill="#fff" stroke="#333" stroke-width="0.8"/><path d="M1.6 3.5 L3 5 L5.4 1.8" stroke="#111" stroke-width="0.9" fill="none"/></svg>
<div class="t" style="left:406.2px;top:201.45px;font-size:6.65px;color:#3a3a3a;">КрасныйПрофиль</div>
<svg class="a" style="left:110px;top:209.39999999999998px" width="8" height="8" viewBox="0 0 8 8"><path d="M1.5 1.5 Q1 6.5 4 6.8 Q7 6.8 6.8 3.5 V1.2" fill="#90d0f0" stroke="#2a6aa8" stroke-width="0.9"/><path d="M2.5 1 v1.5 M5.5 1 v1.5" stroke="#1a4a88" stroke-width="1.1"/><path d="M0.3 2.5 L1.8 3.5" stroke="#2a6aa8" stroke-width="0.7"/></svg>
<div class="t" style="left:118.3px;top:210.89999999999998px;font-size:6.65px;color:#3a3a3a;">Профиль - Уклоноуказат...</div>
<svg class="a" style="left:206.7px;top:209.2px" width="7" height="8" viewBox="0 0 7 8"><path d="M3.5 0.8 C1.5 0.8 0.8 2.4 0.8 3.3 C0.8 4.6 2 5 2.2 6 H4.8 C5 5 6.2 4.6 6.2 3.3 C6.2 2.4 5.5 0.8 3.5 0.8Z" fill="#f4f4b0" stroke="#d4d050" stroke-width="0.8"/><rect x="2.3" y="6.3" width="2.4" height="1.2" fill="#999"/></svg>
<div class="t" style="left:218.0px;top:210.89999999999998px;font-size:6.65px;color:#3a3a3a;">МИП_ПрофильВерт...</div>
<div class="t" style="left:289.8px;top:210.89999999999998px;font-size:6.65px;color:#3a3a3a;">&lt;НЕТ ЗНАЧЕНИЯ&gt;</div>
<svg class="a" style="left:394.7px;top:209.7px" width="7" height="7" viewBox="0 0 7 7"><rect x="0.5" y="0.5" width="6" height="6" fill="#fff" stroke="#333" stroke-width="0.8"/><path d="M1.6 3.5 L3 5 L5.4 1.8" stroke="#111" stroke-width="0.9" fill="none"/></svg>
<div class="t" style="left:406.2px;top:210.89999999999998px;font-size:6.65px;color:#3a3a3a;">КрасныйПрофиль</div>
<div class="t" style="left:561.2px;top:210.89999999999998px;font-size:6.65px;color:#3a3a3a;">&lt;Редактирова...</div>
<svg class="a" style="left:110px;top:218.85px" width="8" height="8" viewBox="0 0 8 8"><path d="M1.5 1.5 Q1 6.5 4 6.8 Q7 6.8 6.8 3.5 V1.2" fill="#90d0f0" stroke="#2a6aa8" stroke-width="0.9"/><path d="M2.5 1 v1.5 M5.5 1 v1.5" stroke="#1a4a88" stroke-width="1.1"/><path d="M0.3 2.5 L1.8 3.5" stroke="#2a6aa8" stroke-width="0.7"/></svg>
<div class="t" style="left:118.3px;top:220.35px;font-size:6.65px;color:#3a3a3a;">Профиль - Уклоноуказат...</div>
<svg class="a" style="left:206.7px;top:218.65px" width="7" height="8" viewBox="0 0 7 8"><path d="M3.5 0.8 C1.5 0.8 0.8 2.4 0.8 3.3 C0.8 4.6 2 5 2.2 6 H4.8 C5 5 6.2 4.6 6.2 3.3 C6.2 2.4 5.5 0.8 3.5 0.8Z" fill="#f4f4b0" stroke="#d4d050" stroke-width="0.8"/><rect x="2.3" y="6.3" width="2.4" height="1.2" fill="#999"/></svg>
<div class="t" style="left:218.0px;top:220.35px;font-size:6.65px;color:#3a3a3a;">МИП_ПрофильУкло...</div>
<div class="t" style="left:289.8px;top:220.35px;font-size:6.65px;color:#3a3a3a;">&lt;НЕТ ЗНАЧЕНИЯ&gt;</div>
<svg class="a" style="left:394.7px;top:219.15px" width="7" height="7" viewBox="0 0 7 7"><rect x="0.5" y="0.5" width="6" height="6" fill="#fff" stroke="#333" stroke-width="0.8"/><path d="M1.6 3.5 L3 5 L5.4 1.8" stroke="#111" stroke-width="0.9" fill="none"/></svg>
<div class="t" style="left:406.2px;top:220.35px;font-size:6.65px;color:#3a3a3a;">КрасныйПрофиль</div>
<div class="t" style="left:561.2px;top:220.35px;font-size:6.65px;color:#3a3a3a;">&lt;Редактирова...</div>
<div class="a" style="left:416.5px;top:350.4px;width:46.5px;height:12px;background:#e1e1e1;border:1px solid #2a7ad8"></div>
<div class="t" style="left:436px;top:353px;font-size:6.65px;color:#3a3a3a;">Да</div>
<div class="a" style="left:469.5px;top:350.4px;width:45.5px;height:12px;background:#e1e1e1;border:1px solid #adadad"></div>
<div class="t" style="left:480.5px;top:353px;font-size:6.65px;color:#3a3a3a;">Отмена</div>
<div class="a" style="left:520.7px;top:350.4px;width:46.89999999999998px;height:12px;background:#e1e1e1;border:1px solid #adadad"></div>
<div class="t" style="left:527.5px;top:353px;font-size:6.65px;color:#3a3a3a;">Применить</div>
<div class="a" style="left:573.8px;top:350.4px;width:46.5px;height:12px;background:#e1e1e1;border:1px solid #adadad"></div>
<div class="t" style="left:585px;top:353px;font-size:6.65px;color:#3a3a3a;">Помощь</div>
</body></html>
